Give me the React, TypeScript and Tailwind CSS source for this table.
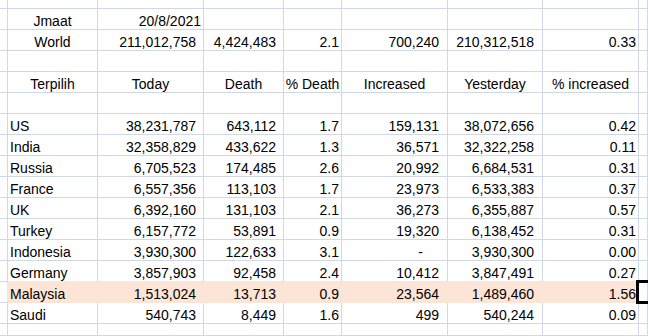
import React from "react";

type Align = "c" | "l" | "a" | "d" | "dash" | "r";
type Cell = { t: string; a: Align } | null;

const C = (t: string): Cell => ({ t, a: "c" });
const L = (t: string): Cell => ({ t, a: "l" });
const A = (t: string): Cell => (t === "-" ? { t, a: "dash" } : { t, a: "a" });
const D = (t: string): Cell => ({ t, a: "d" });

const data: [string, string, string, string, string, string, string][] = [
  ["US", "38,231,787", "643,112", "1.7", "159,131", "38,072,656", "0.42"],
  ["India", "32,358,829", "433,622", "1.3", "36,571", "32,322,258", "0.11"],
  ["Russia", "6,705,523", "174,485", "2.6", "20,992", "6,684,531", "0.31"],
  ["France", "6,557,356", "113,103", "1.7", "23,973", "6,533,383", "0.37"],
  ["UK", "6,392,160", "131,103", "2.1", "36,273", "6,355,887", "0.57"],
  ["Turkey", "6,157,772", "53,891", "0.9", "19,320", "6,138,452", "0.31"],
  ["Indonesia", "3,930,300", "122,633", "3.1", "-", "3,930,300", "0.00"],
  ["Germany", "3,857,903", "92,458", "2.4", "10,412", "3,847,491", "0.27"],
  ["Malaysia", "1,513,024", "13,713", "0.9", "23,564", "1,489,460", "1.56"],
  ["Saudi", "540,743", "8,449", "1.6", "499", "540,244", "0.09"],
];

const empty: Cell[] = [null, null, null, null, null, null, null, null, null];

const rows: { cells: Cell[]; h: string; hl?: boolean; above?: boolean }[] = [
  { cells: empty, h: "h-[9px]" },
  { cells: [null, C("Jmaat"), { t: "20/8/2021", a: "r" }, null, null, null, null, null, null], h: "h-[21px]" },
  {
    cells: [null, C("World"), A("211,012,758"), A("4,424,483"), D("2.1"), A("700,240"), A("210,312,518"), D("0.33"), null],
    h: "h-[21px]",
  },
  { cells: empty, h: "h-[21px]" },
  {
    cells: [null, C("Terpilih"), C("Today"), C("Death"), C("% Death"), C("Increased"), C("Yesterday"), C("% increased"), null],
    h: "h-[21px]",
  },
  { cells: empty, h: "h-[21px]" },
  ...data.map((r) => ({
    cells: [null, L(r[0]), A(r[1]), A(r[2]), D(r[3]), A(r[4]), A(r[5]), D(r[6]), null] as Cell[],
    h: "h-[21px]",
    hl: r[0] === "Malaysia",
    above: r[0] === "Germany",
  })),
  { cells: empty, h: "h-[12px]" },
];

const widths = ["w-[8px]", "w-[90px]", "w-[106px]", "w-[80px]", "w-[58px]", "w-[106px]", "w-[95px]", "w-[96px]", "flex-1"];

function alignCls(a: Align, col: number): string {
  switch (a) {
    case "c":
      return "justify-center";
    case "l":
      return "justify-start pl-[2px]";
    case "a":
      return col >= 5 ? "justify-end pr-[8px]" : "justify-end pr-[7px]";
    case "d":
      return "justify-end pr-[2px]";
    case "r":
      return "justify-end pr-[2px]";
    case "dash":
      return "justify-end pr-[24px]";
  }
}

export default function App() {
  return (
    <div
      className="relative w-[648px] h-[336px] overflow-hidden bg-white text-black text-[14px] leading-[16px]"
      style={{ fontFamily: '"Liberation Sans", Arial, sans-serif' }}
    >
      {rows.map((row, ri) => (
        <div key={ri} className={`flex ${row.h}`}>
          {row.cells.map((cell, ci) => {
            const inHl = row.hl && ci >= 1 && ci <= 7;
            const hlLeft = row.hl && ci === 0;
            const aboveHl = row.above && ci >= 1 && ci <= 7;
            let border = "border-[#d0d7e5]";
            let bg = "bg-white";
            if (inHl) {
              bg = "bg-[#fce4d6]";
              border = ci === 7 ? "border-b-[#fce4d6] border-r-[#d0d7e5]" : "border-[#fce4d6]";
            } else if (hlLeft) {
              border = "border-b-[#d0d7e5] border-r-[#fce4d6]";
            } else if (aboveHl) {
              border = "border-r-[#d0d7e5] border-b-[#fce4d6]";
            }
            return (
              <div
                key={ci}
                className={`${widths[ci]} shrink-0 box-border border-r border-b ${border} ${bg} flex items-end whitespace-nowrap ${
                  cell ? alignCls(cell.a, ci) : ""
                }`}
              >
                {cell ? <span>{cell.t}</span> : null}
              </div>
            );
          })}
        </div>
      ))}
      <div className="absolute left-[636px] top-[280px] w-[20px] h-[24px] border-[3px] border-black" />
    </div>
  );
}
